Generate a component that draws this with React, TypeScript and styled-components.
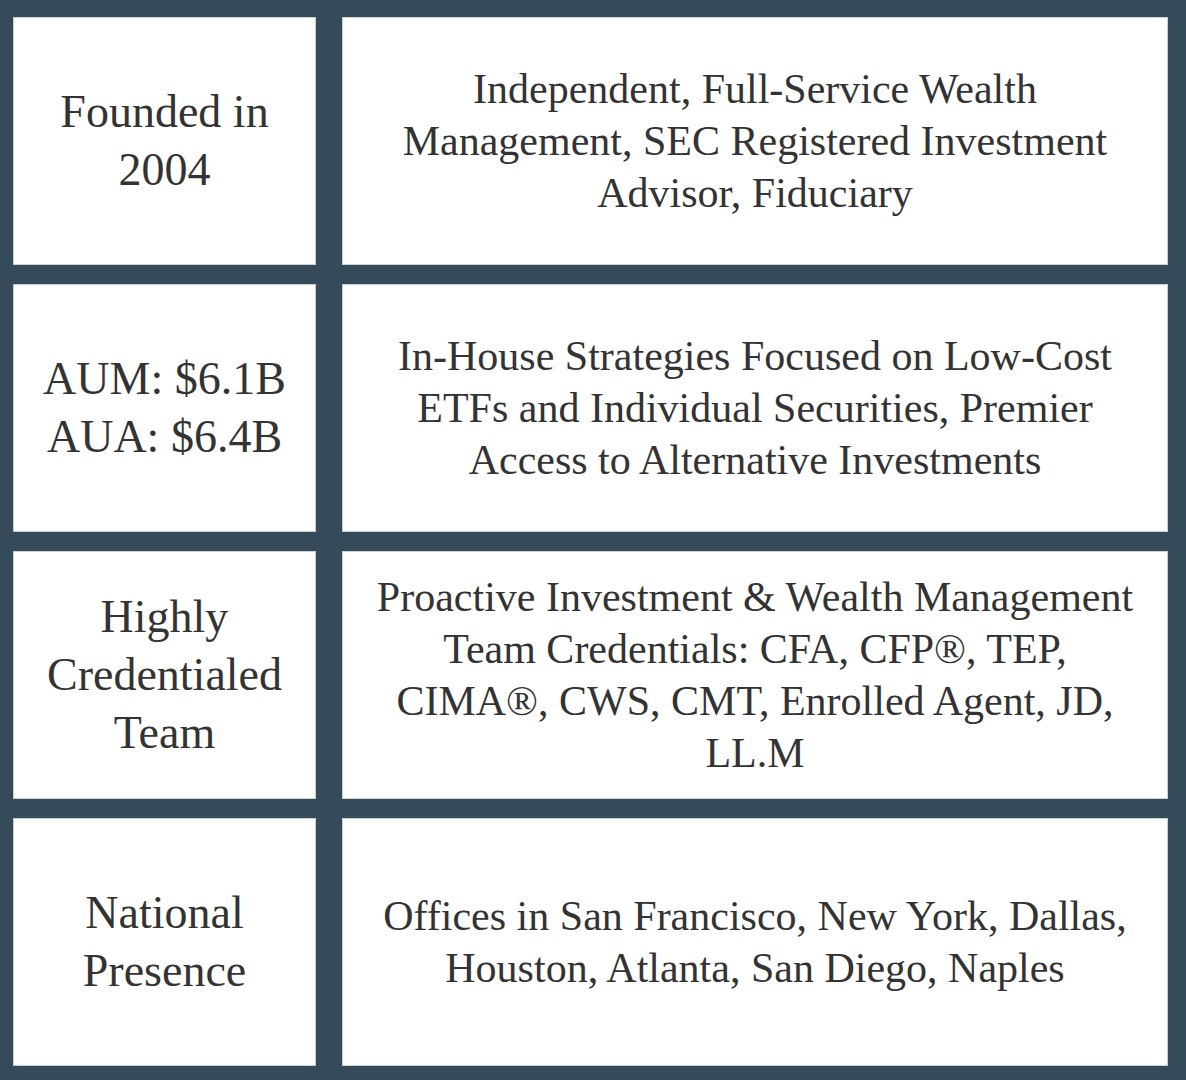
import React from "react";
import styled, { createGlobalStyle } from "styled-components";

const GlobalStyle = createGlobalStyle`
  html, body {
    margin: 0;
    padding: 0;
    background: #364b5a;
  }
`;

const Board = styled.div`
  width: 1186px;
  height: 1080px;
  box-sizing: border-box;
  padding: 17px 18px 15px 13px;
  background: #364b5a;
  display: grid;
  grid-template-columns: 303px 1fr;
  grid-auto-rows: 248px;
  column-gap: 26px;
  row-gap: 19px;
`;

const Cell = styled.div<{ $wide?: boolean }>`
  background: #fff;
  border: 1px solid #c9ced2;
  box-sizing: border-box;
  display: flex;
  align-items: center;
  justify-content: center;
  text-align: center;
  padding: 0 8px;
  font-family: "Liberation Serif", "Times New Roman", serif;
  color: #333;
  font-size: ${(p) => (p.$wide ? "42px" : "46px")};
  line-height: ${(p) => (p.$wide ? "52px" : "58px")};
`;

const rows: { label: string[]; text: string[] }[] = [
  {
    label: ["Founded in", "2004"],
    text: [
      "Independent, Full-Service Wealth",
      "Management, SEC Registered Investment",
      "Advisor, Fiduciary",
    ],
  },
  {
    label: ["AUM: $6.1B", "AUA: $6.4B"],
    text: [
      "In-House Strategies Focused on Low-Cost",
      "ETFs and Individual Securities, Premier",
      "Access to Alternative Investments",
    ],
  },
  {
    label: ["Highly", "Credentialed", "Team"],
    text: [
      "Proactive Investment & Wealth Management",
      "Team Credentials: CFA, CFP®, TEP,",
      "CIMA®, CWS, CMT, Enrolled Agent, JD,",
      "LL.M",
    ],
  },
  {
    label: ["National", "Presence"],
    text: [
      "Offices in San Francisco, New York, Dallas,",
      "Houston, Atlanta, San Diego, Naples",
    ],
  },
];

const Lines = ({ lines }: { lines: string[] }) => (
  <div>
    {lines.map((l, i) => (
      <div key={i}>{l}</div>
    ))}
  </div>
);

export default function App() {
  return (
    <>
      <GlobalStyle />
      <Board>
        {rows.map((r, i) => (
          <React.Fragment key={i}>
            <Cell>
              <Lines lines={r.label} />
            </Cell>
            <Cell $wide>
              <Lines lines={r.text} />
            </Cell>
          </React.Fragment>
        ))}
      </Board>
    </>
  );
}
